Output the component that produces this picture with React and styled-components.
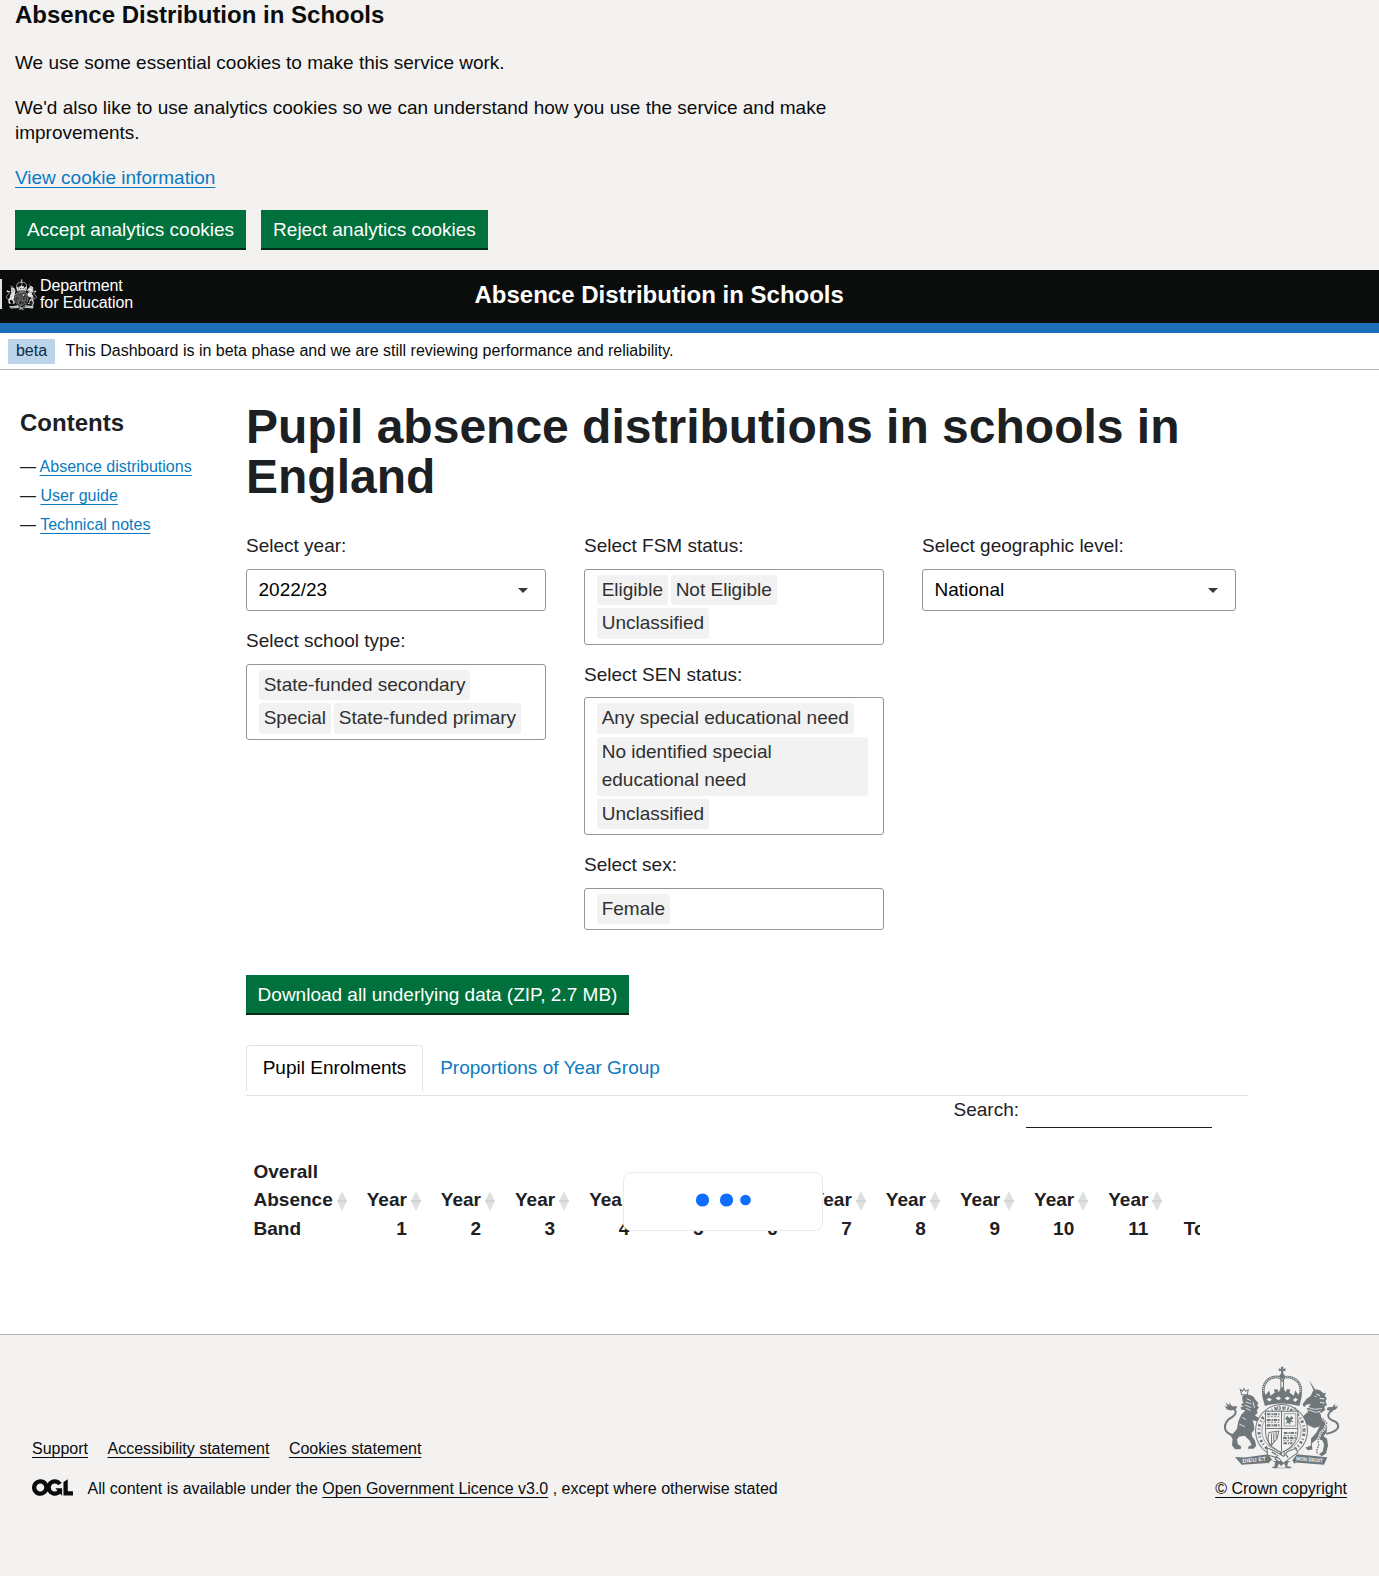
import React from "react";
import styled, { createGlobalStyle, css } from "styled-components";

const GlobalStyle = createGlobalStyle`
  *, *::before, *::after { box-sizing: border-box; }
  body {
    margin: 0;
    background: #fff;
    color: #1d2023;
    font-family: "Liberation Sans", Arial, sans-serif;
    font-size: 19px;
    line-height: 28.5px;
  }
  h1, h2, p, ul { margin: 0; padding: 0; }
`;

const linkLine = css`
  text-decoration: underline;
  text-decoration-thickness: 1px;
  text-underline-offset: 3px;
`;

const Link = styled.a`
  color: ${(p) => (p.$dark ? "#0b0c0c" : "#0b7ac1")};
  ${linkLine}
`;

const CookieBanner = styled.section`
  display: flex;
  flex-direction: column;
  gap: 20px;
  height: 270px;
  padding: 0 15px;
  background: #f3f2f1;
  color: #0b0c0c;
  line-height: 25px;
`;

const CookieTitle = styled.h2`
  font-size: 24px;
  line-height: 30px;
`;

const CookieText = styled.p`
  max-width: 840px;
`;

const ButtonRow = styled.div`
  display: flex;
  gap: 15px;
`;

const Button = styled.button`
  width: ${(p) => p.$width}px;
  height: 38px;
  padding: 1px 0 0;
  border: 0;
  background: #00703c;
  box-shadow: 0 2px 0 #002d18;
  color: #fff;
  font: inherit;
  line-height: 37px;
  text-align: center;
  white-space: nowrap;
`;

const DownloadButton = styled(Button)`
  margin-top: 45px;
`;

const Header = styled.header`
  display: grid;
  grid-template-columns: 474.5px 1fr;
  height: 63px;
  background: #0b0c0c;
  border-bottom: 10px solid #1d70b8;
  color: #fff;
`;

const Brand = styled.div`
  display: flex;
  align-items: flex-start;
  height: 30px;
  margin-top: 9px;
  border-left: 2px solid #e6e6e6;
  padding-left: 4px;
`;

const BrandName = styled.div`
  margin: -2px 0 0 3px;
  font-size: 16px;
  line-height: 17px;
  letter-spacing: -0.1px;
`;

const HeaderTitle = styled.div`
  padding-top: 10px;
  font-size: 24px;
  font-weight: 700;
  line-height: 30px;
`;

const PhaseBanner = styled.div`
  display: flex;
  align-items: flex-start;
  gap: 10.5px;
  height: 37px;
  padding: 6px 8px 0;
  border-bottom: 1px solid #b1b4b6;
  color: #0b0c0c;
  font-size: 16px;
  line-height: 24px;
`;

const PhaseTag = styled.strong`
  width: 47px;
  height: 25px;
  background: #bbd4ea;
  color: #0c2d4a;
  font-weight: 400;
  text-align: center;
`;

const Page = styled.div`
  display: grid;
  grid-template-columns: 226px 1002px;
  padding-left: 20px;
  height: 964px;
`;

const Sidebar = styled.nav`
  padding-top: 38px;
`;

const SidebarTitle = styled.h2`
  font-size: 24px;
  line-height: 30px;
`;

const SidebarList = styled.ul`
  display: flex;
  flex-direction: column;
  gap: 9px;
  margin-top: 19px;
  list-style: none;
  font-size: 16px;
  line-height: 20px;
`;

const Main = styled.main`
  padding-top: 32px;
`;

const Title = styled.h1`
  font-size: 48px;
  line-height: 50px;
`;

const Filters = styled.div`
  display: grid;
  grid-template-columns: 300px 300px 314px;
  gap: 38px;
  margin-top: 29.5px;
  height: 398.5px;
`;

const FilterColumn = styled.div`
  display: flex;
  flex-direction: column;
  gap: 15.1px;
`;

const FieldLabel = styled.div`
  padding-top: 0.85px;
  margin-bottom: 8.15px;
`;

const SelectBox = styled.div`
  display: flex;
  align-items: center;
  justify-content: space-between;
  height: 42.3px;
  padding: 0 17px 0 11.5px;
  border: 1px solid #8d959e;
  border-radius: 3px;
  color: #000;
  line-height: 34px;
`;

const Caret = styled.span`
  border: 5px solid transparent;
  border-top-color: #343a40;
  border-bottom-width: 0;
`;

const TagBox = styled.div`
  display: flex;
  flex-wrap: wrap;
  padding: 4.8px 12px 2px;
  border: 1px solid #8d959e;
  border-radius: 3px;
`;

const Tag = styled.span`
  max-width: 271px;
  margin: 0 3px 3px 0;
  padding: 1px 5px 1px 4.7px;
  border-radius: 3px;
  background: #f2f2f2;
  color: #303030;
`;

const Tabs = styled.div`
  display: flex;
  align-items: flex-start;
  gap: 0.5px;
  height: 51px;
  margin-top: 32px;
  border-bottom: 1px solid #dee2e6;
`;

const Tab = styled.div`
  height: 46px;
  padding: 8px 15.7px;
  border: 1px solid ${(p) => (p.$active ? "#dee2e6" : "transparent")};
  border-bottom: 0;
  border-radius: 3px 3px 0 0;
  color: ${(p) => (p.$active ? "#000" : "#0b7ac1")};
`;

const SearchRow = styled.label`
  display: flex;
  justify-content: flex-end;
  gap: 7px;
  height: 32px;
  padding-right: 36px;
  line-height: 27px;
`;

const SearchInput = styled.input`
  width: 186px;
  height: 32px;
  border: 0;
  border-bottom: 1px solid #1d1d1d;
  background: transparent;
  font: inherit;
`;

const TableWrap = styled.div`
  position: relative;
  width: 954px;
  margin-top: 29.6px;
`;

const TableHead = styled.div`
  display: grid;
  grid-template-columns: 104.7px repeat(11, 74.17px) 74px;
  align-items: end;
  overflow: hidden;
  font-weight: 700;
`;

const HeadCell = styled.div`
  display: flex;
  align-items: center;
  gap: 4px;
  height: 85.5px;
  padding: ${(p) => (p.$first ? "0 0 0 7.5px" : "28.5px 4px 0 0")};
  justify-content: ${(p) => (p.$first ? "flex-start" : "flex-end")};
  text-align: ${(p) => (p.$first ? "left" : "right")};
`;

const TotalCell = styled.div`
  padding-left: 17.3px;
`;

const SortMark = styled.svg`
  flex: none;
  margin-top: ${(p) => (p.$first ? "2px" : "-27px")};
`;

const Loader = styled.div`
  position: absolute;
  left: 377px;
  top: 14.4px;
  display: flex;
  align-items: center;
  justify-content: center;
  width: 200px;
  height: 59px;
  padding-bottom: 3px;
  border: 1px solid #e9ebed;
  border-radius: 8px;
  background: #fff;
`;

const Footer = styled.footer`
  display: flex;
  justify-content: space-between;
  height: 242px;
  padding: 31px 32px 0;
  border-top: 1px solid #b1b4b6;
  background: #f3f2f1;
  color: #0b0c0c;
  font-size: 16px;
  line-height: 20px;
`;

const FooterMeta = styled.div`
  padding-top: 73px;
`;

const FooterLinks = styled.div`
  display: flex;
  gap: 19.5px;
`;

const Licence = styled.div`
  display: flex;
  gap: 14.5px;
  margin-top: 20px;
`;

const CopyrightBlock = styled.div`
  display: flex;
  flex-direction: column;
  align-items: center;
  gap: 9px;
`;

function Lion({ color, ground }) {
  return (
    <g fill={color}>
      <path d="M152 209l7 5 4-8 5 8 8-4-3 15h-17z" fill="none" stroke={color} strokeWidth="3" />
      <path d="M158 229l9-4h13l11 5 7 10 8 9-3 7 5 7-6 8 2 9-8 6 12 9 18 4 9-7 4 7-5 8-14 4-19-7-12-3 4 13 1 15-8 10 2 11 8 10 4 17-8 9h-17l2-8 9-3-6-14-15-14-17 3-6 8 3 14 10 7-2 8h-17l-9-12 2-18-6-10 9-8 10-12 4-23 9-20 12-12-13-4-1-8 9 2-8-9 8-4-4-7z" />
      <path d="M137 347q-20-2-29-16-7-18 10-34 22-12 20-22-2-9-15-10" fill="none" stroke={color} strokeWidth="6" />
      <path d="M107 248l13 9-2-11 9 13 17 0-6 9-15 4-11-3-7-10 9 1z" />
      <path d="M171 237l13 5M168 246l18 6M165 255l20 8M169 265l14 7M190 245l5 19M158 292l11 7M149 312l17 8" stroke={ground} strokeWidth="2.5" fill="none" />
    </g>
  );
}

function Unicorn({ color, ground }) {
  return (
    <g fill={color}>
      <path d="M359 181l20 31-5 4z" />
      <path d="M370 214l10-6 13 4 9 8 8-1-4 9 6 8-4 9 5 10-8 5 2 10-12 9-14-3-24 2-5-12 13-13-13 1-8 7-5-7 12-17 13-9z" />
      <path d="M352 278l17-8 17 4 9 11 2 21-8 14-15 4-19-9-15-14-14-3-3-9 10-4 9 3z" />
      <path d="M393 292l13 10 8 18-3 18-12 14-17 5-15 13 2 18-14 2-7-8 16-5 1-22 16-18 9-17z" />
      <path d="M397 345l16 11 3 20-6 24-13 8-8-6 11-8 4-21-5-12-16-6z" />
      <path d="M411 341q25-4 35-18 3-15-14-21-17-6-15-17 1-10 13-13" fill="none" stroke={color} strokeWidth="6" />
      <path d="M449 252l-13 9 2-11-9 11-14 1-3 8 13 3 14-4 8-9-8 1z" />
      <path d="M351 261l24 7 23-2M354 269l25 8 15-3" stroke={ground} strokeWidth="2.5" fill="none" />
      <path d="M381 222l11 6M391 235l14 2M392 247l13 3M376 230h4" stroke={ground} strokeWidth="3" fill="none" />
      <path d="M400 295l12 14-6 17-12 12-8 20 2 16-7 18 5 10" stroke={ground} strokeWidth="7" fill="none" />
      <path d="M400 295l12 14-6 17-12 12-8 20 2 16-7 18 5 10" stroke={color} strokeWidth="4" strokeDasharray="5 3" fill="none" />
    </g>
  );
}

function Crest({ width, height, color, ground }) {
  return (
    <svg width={width} height={height} viewBox="100 139 352 310" preserveAspectRatio="none" aria-label="Royal coat of arms">
      <Lion color={color} ground={ground} />
      <Unicorn color={color} ground={ground} />
      <path d="M136 410l30 2 70-10 14 20 57 0 15-20 92 9-10 22-86-6-15 17h-52l-15-16-80 5z" fill={color} />
      <circle cx="276" cy="332" r="78" fill={ground} stroke={color} strokeWidth="3" />
      <circle cx="276" cy="332" r="68" fill="none" stroke={color} strokeWidth="9" strokeDasharray="3 6 7 8" />
      <circle cx="276" cy="332" r="59" fill={ground} stroke={color} strokeWidth="2" />
      <path d="M228 274h97v60q0 42-49 63-48-21-48-63z" fill={ground} stroke={color} strokeWidth="3" />
      <path d="M232 283h39M232 300h39M232 316h39M283 339h39M281 354h38M282 369h27" stroke={color} strokeWidth="6" strokeDasharray="11 3 4 2" />
      <path d="M234 290h35M234 307h35M283 347h38M282 362h32" stroke={color} strokeWidth="3" strokeDasharray="6 4" />
      <path d="M276 274v119M230 325h95" stroke={color} strokeWidth="3" />
      <path d="M284 281h35v37h-35z" fill="none" stroke={color} strokeWidth="2" />
      <path d="M293 287l7 8 6-7 6 7-7 6 8 6-10-1-2 9-5-7-8 4 5-9-6-7z" fill={color} />
      <path d="M239 337l29-4-5 22-20 23q-13-18-4-41zM246 340v32M253 338v26M260 336v18" fill="none" stroke={color} strokeWidth="3" />
      <g fill="none" stroke={color}>
        <path d="M223 226c-7-28 6-47 27-53 14-4 24 0 28 7 4-7 15-11 29-6 20 7 32 25 25 52" strokeWidth="8" />
        <path d="M223 226c-7-28 6-47 27-53 14-4 24 0 28 7 4-7 15-11 29-6 20 7 32 25 25 52" stroke={ground} strokeWidth="3" strokeDasharray="3 3" />
        <path d="M274 176v32M282 176v32" strokeWidth="3" />
      </g>
      <path d="M274 141h8l-1 7 7-2v9l-7-2 1 10 5 5-3 7h-12l-3-7 5-5 1-10-7 2v-9l7 2z" fill={color} />
      <path d="M221 215l8 10 10-13 4 16 13-10-3-9 11-1 3 9 11-17 11 17 3-9 11 1-3 9 13 10 4-16 10 13 8-10 2 14-7 29q-52-15-104 0l-8-29z" fill={color} />
      <path d="M231 239l8-5 8 5-7 6zM258 235l8-5 9 5-8 6zM285 235l9-5 8 5-8 6zM310 240l8-6 7 5-7 7z" fill={ground} />
      <path d="M232 383l22 9 28 16 12-14 24-9 7 12-25 18-19 14-13-15-34-10z" fill={ground} stroke={color} strokeWidth="3" />
      <path d="M247 395l13 8M265 404l-8 12 10 8M289 403l7 9" fill="none" stroke={color} strokeWidth="4" />
      <path d="M237 429l8-10 12 8-3 12h-12zM293 438l3-12 13-6 6 12-7 8zM268 430l7 7 9-8 5 13h-26z" fill={ground} />
      <text x="159" y="428" fontSize="16" fontWeight="700" fill={ground} transform="rotate(-6 159 428)" textLength="71" lengthAdjust="spacingAndGlyphs">DIEU ET</text>
      <text x="320" y="420" fontSize="16" fontWeight="700" fill={ground} transform="rotate(5 320 420)" textLength="80" lengthAdjust="spacingAndGlyphs">MON DROIT</text>
      <path d="M255 262l3 6M264 260q8-5 9 4t-9 4zM281 260v6q4 6 7 0v-6M297 261v8M312 271l5-8 3 10" stroke={color} strokeWidth="2.5" fill="none" />
    </svg>
  );
}

function OglLogo() {
  return (
    <svg width="41" height="17" viewBox="0 0 483.2 195.7" aria-label="Open Government Licence">
      <path
        fill="#0b0c0c"
        d="M421.5 142.8V.1l-50.7 32.3v161.1h112.4v-50.7zm-122.3-9.6A47.12 47.12 0 0 1 221 97.8c0-26 21.1-47.1 47.1-47.1 16.7 0 31.4 8.7 39.7 21.8l42.7-27.2A97.63 97.63 0 0 0 268.1 0c-36.5 0-68.3 20.1-85.1 49.7A98 98 0 0 0 97.8 0C43.9 0 0 43.9 0 97.8s43.9 97.8 97.8 97.8c36.5 0 68.3-20.1 85.1-49.7a97.76 97.76 0 0 0 149.6 25.4l19.4 22.2h3v-87.8h-80l24.3 27.5zM97.8 145c-26 0-47.1-21.1-47.1-47.1s21.1-47.1 47.1-47.1 47.1 21.1 47.1 47.1S123.8 145 97.8 145"
      />
    </svg>
  );
}

function Sort({ first }) {
  return (
    <SortMark $first={first} width="10" height="20" viewBox="0 0 10 20">
      <path d="M5 0l5 10H0zM5 20L0 10h10z" fill="#dfe0e1" />
      <path d="M0 10h10" stroke="#c5c7c8" strokeWidth="1" />
    </SortMark>
  );
}

function Select({ label, value }) {
  return (
    <div>
      <FieldLabel>{label}</FieldLabel>
      <SelectBox>
        {value}
        <Caret />
      </SelectBox>
    </div>
  );
}

function MultiSelect({ label, values }) {
  return (
    <div>
      <FieldLabel>{label}</FieldLabel>
      <TagBox>
        {values.map((v) => (
          <Tag key={v}>{v}</Tag>
        ))}
      </TagBox>
    </div>
  );
}

const contents = ["Absence distributions", "User guide", "Technical notes"];
const years = [1, 2, 3, 4, 5, 6, 7, 8, 9, 10, 11];

export default function App() {
  return (
    <>
      <GlobalStyle />
      <CookieBanner>
        <CookieTitle>Absence Distribution in Schools</CookieTitle>
        <CookieText>We use some essential cookies to make this service work.</CookieText>
        <CookieText>
          We'd also like to use analytics cookies so we can understand how you use the service and make improvements.
        </CookieText>
        <CookieText>
          <Link>View cookie information</Link>
        </CookieText>
        <ButtonRow>
          <Button $width={231}>Accept analytics cookies</Button>
          <Button $width={227}>Reject analytics cookies</Button>
        </ButtonRow>
      </CookieBanner>
      <Header>
        <Brand>
          <Crest width={31} height={31} color="#e8e8e8" ground="#0b0c0c" />
          <BrandName>
            Department
            <br />
            for Education
          </BrandName>
        </Brand>
        <HeaderTitle>Absence Distribution in Schools</HeaderTitle>
      </Header>
      <PhaseBanner>
        <PhaseTag>beta</PhaseTag>
        <span>This Dashboard is in beta phase and we are still reviewing performance and reliability.</span>
      </PhaseBanner>
      <Page>
        <Sidebar>
          <SidebarTitle>Contents</SidebarTitle>
          <SidebarList>
            {contents.map((c) => (
              <li key={c}>
                — <Link>{c}</Link>
              </li>
            ))}
          </SidebarList>
        </Sidebar>
        <Main>
          <Title>Pupil absence distributions in schools in England</Title>
          <Filters>
            <FilterColumn>
              <Select label="Select year:" value="2022/23" />
              <MultiSelect
                label="Select school type:"
                values={["State-funded secondary", "Special", "State-funded primary"]}
              />
            </FilterColumn>
            <FilterColumn>
              <MultiSelect label="Select FSM status:" values={["Eligible", "Not Eligible", "Unclassified"]} />
              <MultiSelect
                label="Select SEN status:"
                values={["Any special educational need", "No identified special educational need", "Unclassified"]}
              />
              <MultiSelect label="Select sex:" values={["Female"]} />
            </FilterColumn>
            <FilterColumn>
              <Select label="Select geographic level:" value="National" />
            </FilterColumn>
          </Filters>
          <ButtonRow>
            <DownloadButton $width={383}>Download all underlying data (ZIP, 2.7 MB)</DownloadButton>
          </ButtonRow>
          <Tabs>
            <Tab $active>Pupil Enrolments</Tab>
            <Tab>Proportions of Year Group</Tab>
          </Tabs>
          <SearchRow>
            Search:
            <SearchInput />
          </SearchRow>
          <TableWrap>
            <TableHead>
              <HeadCell $first>
                <span>
                  Overall
                  <br />
                  Absence
                  <br />
                  Band
                </span>
                <Sort first />
              </HeadCell>
              {years.map((y) => (
                <HeadCell key={y}>
                  <span>
                    Year
                    <br />
                    {y}
                  </span>
                  <Sort />
                </HeadCell>
              ))}
              <TotalCell>Total</TotalCell>
            </TableHead>
            <Loader>
              <svg width="56" height="14" viewBox="0 0 56 14" fill="#0d6efd">
                <circle cx="7.5" cy="7" r="6.6" />
                <circle cx="31.5" cy="7" r="6.6" />
                <circle cx="50.5" cy="7" r="5.3" />
              </svg>
            </Loader>
          </TableWrap>
        </Main>
      </Page>
      <Footer>
        <FooterMeta>
          <FooterLinks>
            <Link $dark>Support</Link>
            <Link $dark>Accessibility statement</Link>
            <Link $dark>Cookies statement</Link>
          </FooterLinks>
          <Licence>
            <OglLogo />
            <span>
              All content is available under the <Link $dark>Open Government Licence v3.0</Link> , except where
              otherwise stated
            </span>
          </Licence>
        </FooterMeta>
        <CopyrightBlock>
          <Crest width={117} height={104} color="#6f777b" ground="#f3f2f1" />
          <Link $dark>© Crown copyright</Link>
        </CopyrightBlock>
      </Footer>
    </>
  );
}
